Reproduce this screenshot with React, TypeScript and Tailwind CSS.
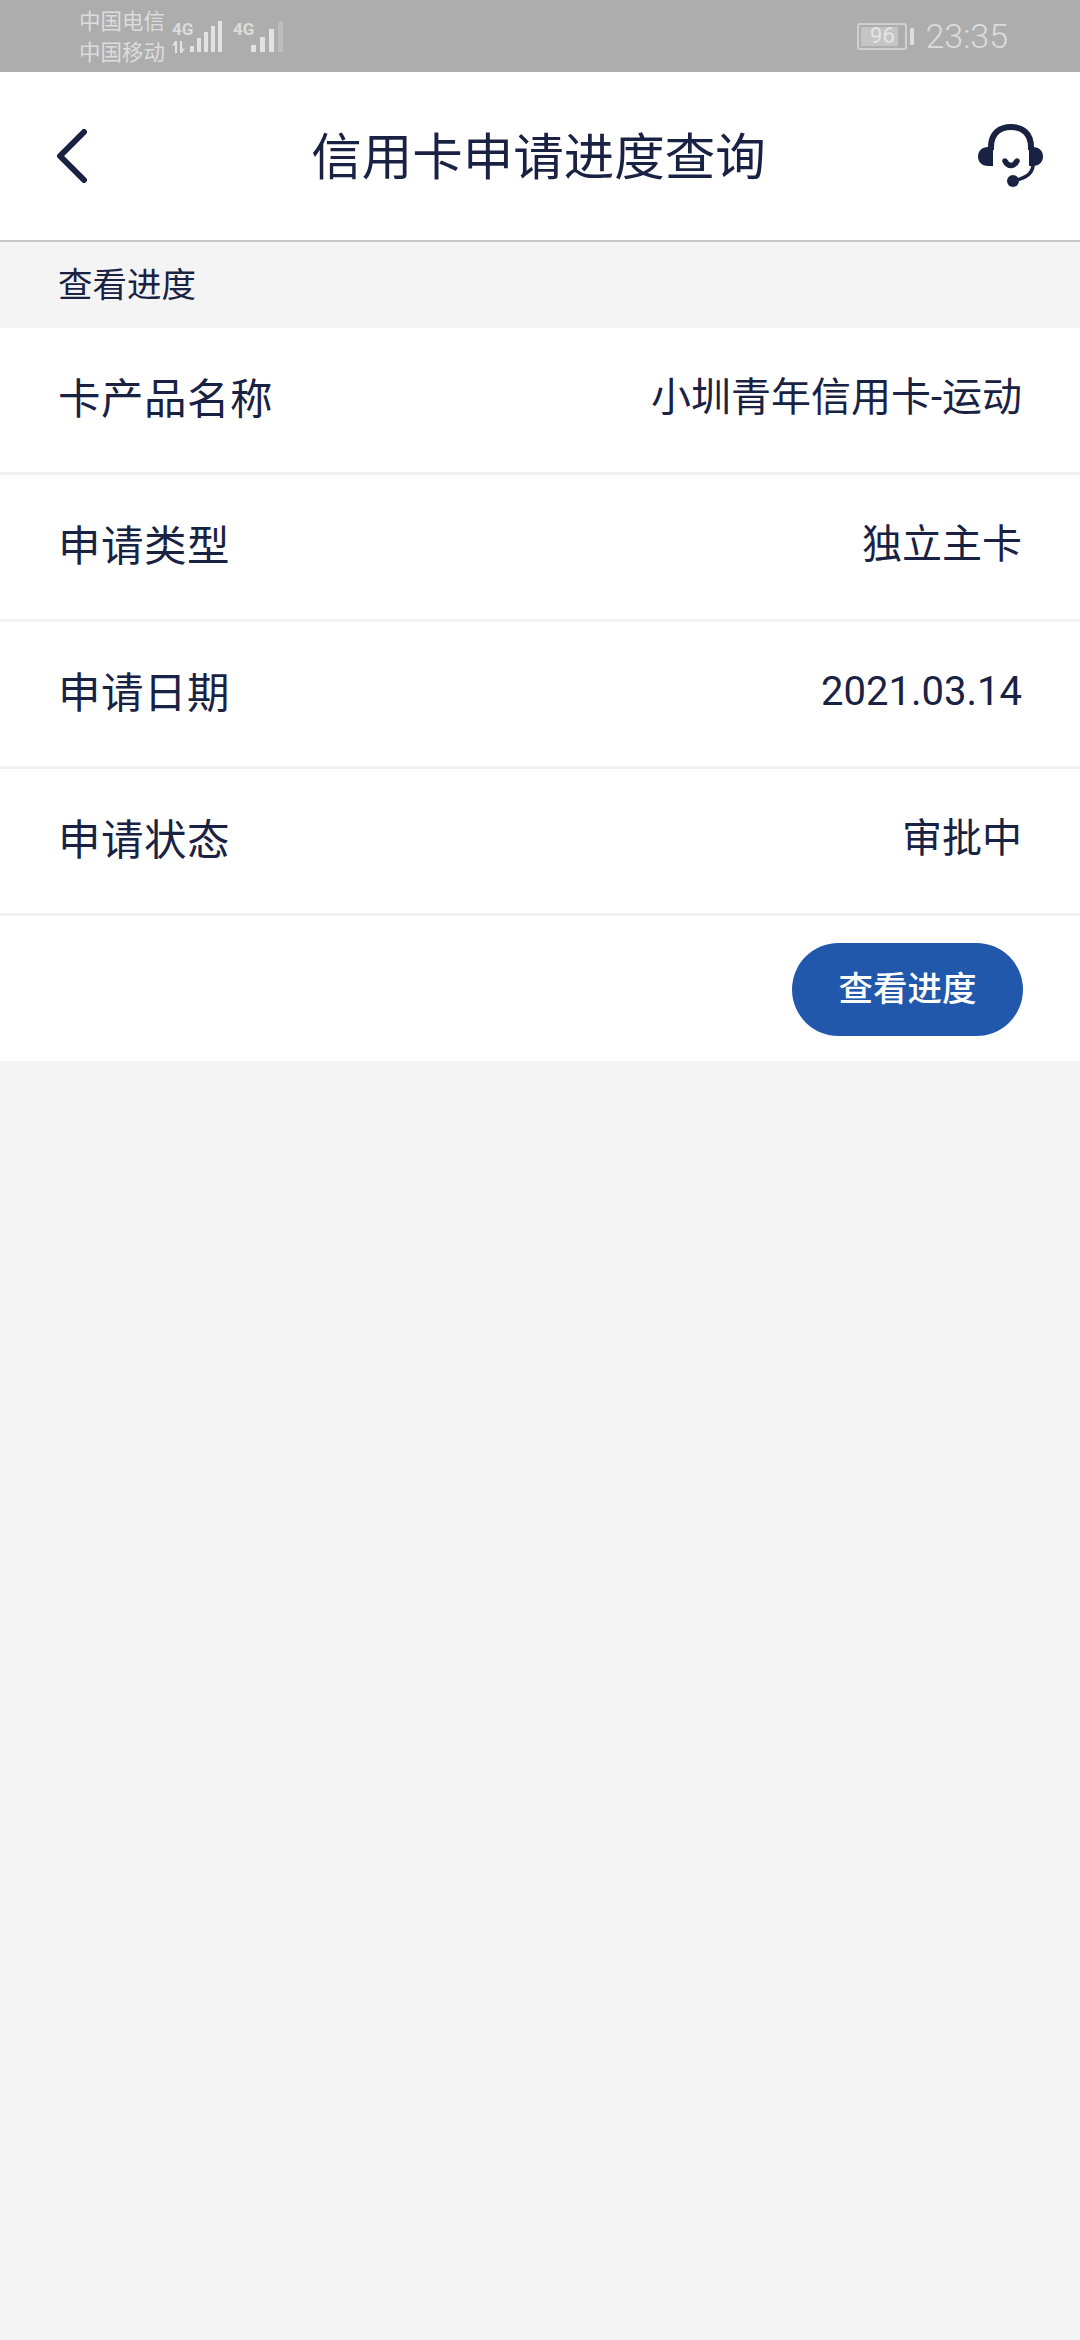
const ink = "text-[#1a2244]";

const rows = [
  { label: "卡产品名称", value: "小圳青年信用卡-运动" },
  { label: "申请类型", value: "独立主卡" },
  { label: "申请日期", value: "2021.03.14" },
  { label: "申请状态", value: "审批中" },
];

const SignalBars = ({ heights, dim, thin }: { heights: number[]; dim?: boolean; thin?: boolean }) => (
  <div className={`flex items-end h-[31px] ${thin ? "gap-[3px]" : "gap-[4px]"}`}>
    {heights.map((h, i) => (
      <div
        key={i}
        className={`${thin ? "w-[4px]" : "w-[5px]"} ${dim && i === heights.length - 1 ? "bg-[#bdbdbd]" : "bg-[#e2e2e2]"}`}
        style={{ height: h }}
      />
    ))}
  </div>
);

const FourG = () => (
  <span
    className="absolute left-[0px] top-[-3px] text-[17px] font-bold leading-[22px]"
    style={{ fontFamily: '"Liberation Sans Narrow", "Roboto", sans-serif' }}
  >
    4G
  </span>
);

const StatusBar = () => (
  <div className="h-[72px] bg-[#adadad] flex items-center justify-between pl-[79px] pr-[72px] text-[#dcdcdc]">
    <div className="flex items-center">
      <div className="flex flex-col text-[21.5px] leading-[31px] w-[93px] mt-[-2px]">
        <span>中国电信</span>
        <span>中国移动</span>
      </div>
      <div className="relative w-[50px] h-[31px]">
        <FourG />
        <svg width="15" height="12" viewBox="0 0 15 12" className="absolute left-[0px] bottom-[-1px]" fill="#e2e2e2">
          <path d="M3 0 H5 V12 H3 V4 L0 5 Z" />
          <path d="M8 0 H10 V8 L13 7 L10 12 H8 Z" />
        </svg>
        <div className="absolute right-[0px] bottom-[0px]">
          <SignalBars heights={[6, 14, 20, 26, 31]} thin />
        </div>
      </div>
      <div className="relative w-[50px] h-[31px] ml-[11px]">
        <FourG />
        <div className="absolute right-[0px] bottom-[0px]">
          <SignalBars heights={[7, 15, 23, 31]} dim />
        </div>
      </div>
    </div>
    <div className="flex items-center">
      <div className="w-[50px] h-[27px] rounded-[3px] border-[2px] border-[#d0d0d0] p-[2px] relative">
        <div className="h-full w-[88%] bg-[#c4c4c4]" />
        <span
          className="absolute inset-0 flex items-center justify-center text-[22px] leading-none text-[#e4e4e4]"
          style={{ fontFamily: '"Roboto", sans-serif' }}
        >
          96
        </span>
      </div>
      <div className="w-[4px] h-[17px] rounded-[1px] bg-[#dcdcdc] ml-[3px]" />
      <span
        className="ml-[11px] text-[34px] leading-none"
        style={{ fontFamily: '"Roboto", sans-serif', fontWeight: 300 }}
      >
        23:35
      </span>
    </div>
  </div>
);

const Header = () => (
  <div className="h-[170px] bg-white border-b-[2px] border-[#c6c6c6] flex items-center justify-between pl-[56px] pr-[36px]">
    <svg width="32" height="54" viewBox="0 0 32 54" fill="none" className="mt-[-1px]">
      <path d="M28 3 L4 27 L28 51" stroke="#1a2244" strokeWidth="6" strokeLinecap="round" strokeLinejoin="round" />
    </svg>
    <h1 className={`text-[50.5px] leading-none mt-[-6px] ml-[11px] ${ink}`}>信用卡申请进度查询</h1>
    <svg width="66" height="66" viewBox="0 0 66 66" fill="none">
      <path d="M13 27 V24 C13 10 22 4 33 4 C44 4 53 10 53 24 V27" stroke="#1a2244" strokeWidth="6" />
      <path d="M10 24 H15 V43 H10 C4 43 0 39 0 33.5 C0 28 4 24 10 24 Z" fill="#1a2244" />
      <path d="M51 24 H55 C61 24 65 28 65 33.5 C65 39 61 43 55 43 H51 Z" fill="#1a2244" />
      <path d="M27 38 C30 44 36 44 39 38" stroke="#1a2244" strokeWidth="5.5" strokeLinecap="round" />
      <path d="M55 43 C54 50 48 55 38 57" stroke="#1a2244" strokeWidth="3.5" strokeLinecap="round" />
      <circle cx="35" cy="58" r="6" fill="#1a2244" />
    </svg>
  </div>
);

export default function App() {
  return (
    <div
      className="min-h-[2340px] bg-[#f4f4f5] flex flex-col"
      style={{ fontFamily: '"Noto Sans CJK SC", "Roboto", sans-serif' }}
    >
      <StatusBar />
      <Header />
      <div className={`h-[86px] pl-[58px] pb-[5px] flex items-center text-[34.5px] leading-none ${ink}`}>查看进度</div>
      <div className="bg-white">
        {rows.map((row) => (
          <div
            key={row.label}
            className={`h-[147px] border-b-[3px] border-[#f1f1f2] flex items-center justify-between pl-[58px] pr-[58px] ${ink}`}
          >
            <span className="text-[42.5px] leading-none tracking-[0.5px] mt-[-8px]">{row.label}</span>
            <span className="text-[40px] leading-none mt-[-5px]" style={{ fontFamily: '"Roboto", "Noto Sans CJK SC", sans-serif' }}>
              {row.value}
            </span>
          </div>
        ))}
        <div className="h-[145px] flex items-center justify-end pr-[57px]">
          <button className="w-[231px] h-[93px] mt-[2px] rounded-full bg-[#2258ac] text-white text-[34.5px] font-medium leading-none pb-[6px]">
            查看进度
          </button>
        </div>
      </div>
    </div>
  );
}
